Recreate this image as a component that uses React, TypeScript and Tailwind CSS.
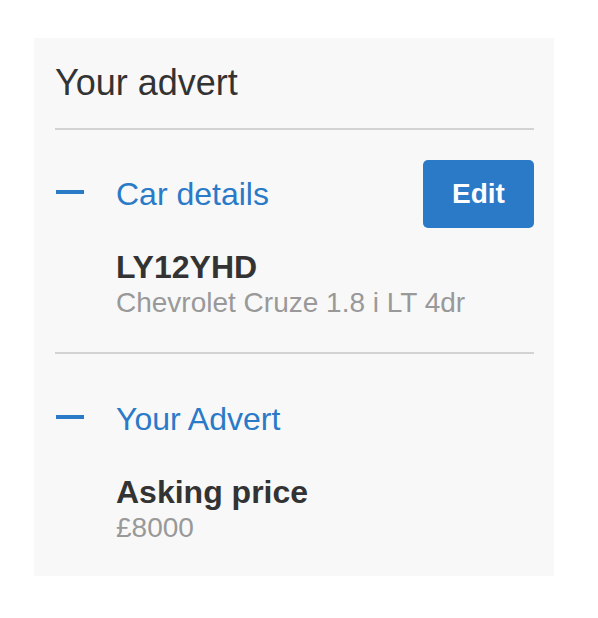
const font = { fontFamily: '"Liberation Sans", Arial, sans-serif' };

interface SectionProps {
  title: string;
  label: string;
  value: string;
  onEdit?: boolean;
}

const Section = (props: SectionProps) => {
  return (
    <div>
      <div className="flex h-[68px] items-center">
        <div className="flex w-[61px] shrink-0 pb-[4px]">
          <span className="ml-[1px] h-[4px] w-[28px] bg-[#2a7ac8]" />
        </div>
        <h2 className="flex-1 text-[32px] leading-[36px] text-[#2a7ac8]">
          {props.title}
        </h2>
        {props.onEdit && (
          <button className="h-[68px] w-[111px] rounded-[5px] bg-[#2a7ac8] text-[28px] font-bold text-white">
            Edit
          </button>
        )}
      </div>
      <div className="mt-[22px] pl-[61px]">
        <div className="text-[32px] font-bold leading-[34px] text-[#333333]">
          {props.label}
        </div>
        <div className="mt-[3px] text-[28px] leading-[32px] text-[#999999]">
          {props.value}
        </div>
      </div>
    </div>
  );
};

const App = () => {
  return (
    <div className="min-h-[618px] bg-white pt-[38px] pl-[34px]" style={font}>
      <div className="w-[520px] bg-[#f8f8f8] pt-[25px] pr-[20px] pb-[32px] pl-[21px]">
        <h1 className="text-[36px] leading-[40px] text-[#333333]">Your advert</h1>
        <div className="mt-[25px] h-[2px] bg-[#d3d3d3]" />
        <div className="mt-[30px]">
          <Section
            title="Car details"
            label="LY12YHD"
            value="Chevrolet Cruze 1.8 i LT 4dr"
            onEdit
          />
        </div>
        <div className="mt-[33px] h-[2px] bg-[#d3d3d3]" />
        <div className="mt-[31px]">
          <Section title="Your Advert" label="Asking price" value="£8000" />
        </div>
      </div>
    </div>
  );
};

export default App;
